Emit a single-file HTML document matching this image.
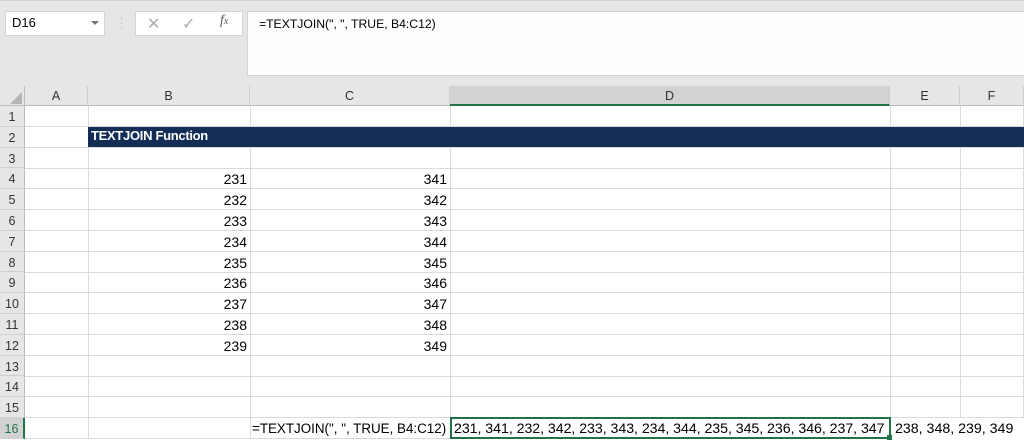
<!DOCTYPE html>
<html><head><style>
*{margin:0;padding:0;box-sizing:border-box}
body{width:1024px;height:439px;overflow:hidden;background:#fff;font-family:"Liberation Sans",Arial,sans-serif;position:relative}
.a{position:absolute}
.t{font-size:13px;color:#000;white-space:nowrap;line-height:20.8px}
.hl{position:absolute;left:25px;width:999px;height:1px;background:#dadada}
.vl{position:absolute;top:106px;width:1px;height:333px;background:#dadada}
.rh{position:absolute;left:0;width:25px;height:20.8px;text-align:center;font-size:12.5px;line-height:22px;color:#333;background:#e6e6e6;border-bottom:1px solid #cfcfcf;border-right:1px solid #bcbcbc}
.ch{position:absolute;top:86px;height:20px;text-align:center;font-size:12.5px;line-height:21px;color:#333;background:#e6e6e6;border-right:1px solid #cfcfcf;border-bottom:1px solid #bcbcbc}
.n{position:absolute;text-align:right;font-size:14px;line-height:22px}
</style></head><body>
<div class="a" style="left:0;top:0;width:1024px;height:86px;background:#e6e6e6"></div>
<div class="a" style="left:0;top:0;width:1024px;height:1px;background:#d0d0d0"></div>
<div class="a" style="left:5px;top:11px;width:100px;height:25px;background:#fff;border:1px solid #d4d4d4"></div>
<div class="a t" style="left:12px;top:13px;font-size:13px">D16</div>
<div class="a" style="left:91px;top:21px;width:0;height:0;border-left:4px solid transparent;border-right:4px solid transparent;border-top:4px solid #777"></div>
<div class="a" style="left:120px;top:16px;color:#aaa;font-size:10px;line-height:5px">·<br>·<br>·</div>
<div class="a" style="left:135px;top:11px;width:108px;height:25px;background:#fff;border:1px solid #d4d4d4"></div>
<div class="a" style="left:147px;top:14px;color:#aaa;font-size:16px">✕</div>
<div class="a" style="left:182px;top:14px;color:#aaa;font-size:16px">✓</div>
<div class="a" style="left:220px;top:13px;color:#555;font-size:14px;font-style:italic;font-family:'Liberation Serif',serif">f<span style="font-size:10px">x</span></div>
<div class="a" style="left:247px;top:11px;width:777px;height:65px;background:#fdfdfd;border:1px solid #d4d4d4;border-right:none"></div>
<div class="a t" style="left:259px;top:14px;font-size:12.2px">=TEXTJOIN(", ", TRUE, B4:C12)</div>

<div class="a" style="left:0;top:86px;width:25px;height:20px;background:#e6e6e6;border-right:1px solid #bcbcbc;border-bottom:1px solid #bcbcbc"></div>
<div class="a" style="left:10px;top:92px;width:0;height:0;border-left:12px solid transparent;border-bottom:12px solid #b5b5b5"></div>
<div class="ch" style="left:25px;width:63px">A</div>
<div class="ch" style="left:88px;width:162px">B</div>
<div class="ch" style="left:250px;width:200px">C</div>
<div class="ch" style="left:450px;width:440px;background:#d2d2d2;border-bottom:2px solid #217346">D</div>
<div class="ch" style="left:890px;width:70px">E</div>
<div class="ch" style="left:960px;width:64px">F</div>

<div class="vl" style="left:88px"></div><div class="vl" style="left:250px"></div><div class="vl" style="left:450px"></div><div class="vl" style="left:890px"></div><div class="vl" style="left:960px"></div><div class="vl" style="left:1023px"></div>

<div class="a" style="left:88px;top:125.6px;width:936px;height:21px;background:#142d56"></div>
<div class="a t" style="left:91px;top:126px;color:#fff;font-weight:bold;font-size:13px;letter-spacing:-0.3px">TEXTJOIN Function</div>

<div id="rows"></div>
<script>
var h='';
for(var i=0;i<16;i++){var y=106+i*20.8;
h+='<div class="rh" style="top:'+y+'px'+(i==15?';background:#d2d2d2;border-right:2px solid #217346;color:#217346':'')+'">'+(i+1)+'</div>';
h+='<div class="hl" style="top:'+(y+20)+'px"></div>';}
for(var r=4;r<=12;r++){var y=106+(r-1)*20.8;
h+='<div class="n" style="left:88px;width:159px;top:'+y+'px">'+(227+r)+'</div>';
h+='<div class="n" style="left:250px;width:197px;top:'+y+'px">'+(337+r)+'</div>';}
document.getElementById('rows').innerHTML=h;
</script>
<div class="a t" style="left:252px;top:419px;font-size:13.4px">=TEXTJOIN(", ", TRUE, B4:C12)</div>
<div class="a" style="left:450px;top:417px;width:441px;height:22px;border:2px solid #217346;background:#fff"></div>
<div class="a t" style="left:454px;top:419px;font-size:14.2px;letter-spacing:-0.05px">231, 341, 232, 342, 233, 343, 234, 344, 235, 345, 236, 346, 237, 347</div>
<div class="a" style="left:891px;top:418px;width:133px;height:21px;background:#fff"></div>
<div class="a t" style="left:895px;top:419px;font-size:14.2px">238, 348, 239, 349</div>
<div class="a" style="left:887px;top:435px;width:5px;height:5px;background:#217346"></div>
</body></html>
